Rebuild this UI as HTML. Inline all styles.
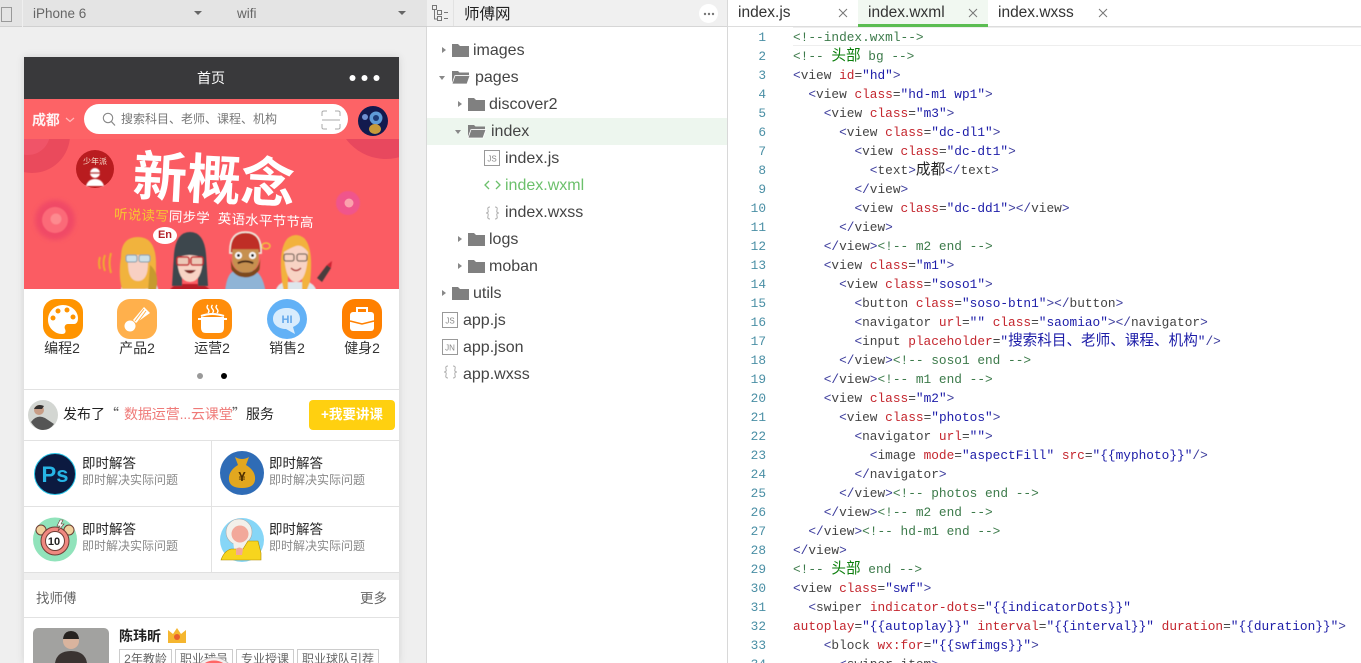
<!DOCTYPE html>
<html><head><meta charset="utf-8"><style>
html,body{margin:0;padding:0;width:1361px;height:663px;overflow:hidden;background:#fff}
body{position:relative;font-family:"Liberation Sans","Noto Sans CJK SC",sans-serif;color:#333}
div,span{box-sizing:border-box}
.p{position:absolute;white-space:nowrap}
.tree{font-size:16px;color:#444;line-height:27px;height:27px}
.code{position:absolute;left:793px;top:28px;height:635px;overflow:hidden;font:12.8px/19px "Liberation Mono","Noto Sans CJK SC",monospace;color:#444;white-space:pre}
.nums{position:absolute;left:728px;top:28px;height:635px;overflow:hidden;width:38px;text-align:right;font:12.8px/19px "Liberation Mono",monospace;color:#4a8fa5;white-space:pre}
.code b{font-weight:400;color:#3b3b9c}.code i{font-style:normal;color:#c4262e}.code u{text-decoration:none;color:#1c1ca8}.code em{font-style:normal;color:#3c7a4a}.code q{quotes:none;color:#0a7d0a;font-size:14.6px;line-height:1}.code s{text-decoration:none;color:#1c1ca8;font-size:14.6px;line-height:1}
.ic{position:absolute;top:299px;width:40px;height:40px;border-radius:13px}
.lb{position:absolute;top:339px;font-size:14px;line-height:18px;color:#333;width:60px;text-align:center}
.t1{position:absolute;font-size:13.5px;color:#222;line-height:18px;white-space:nowrap}
.t2{position:absolute;font-size:12px;color:#888;line-height:16px;white-space:nowrap}
.tag{position:absolute;top:649px;height:14px;overflow:hidden;border:1px solid #ccc;border-bottom:0;font-size:12px;color:#666;text-align:center;line-height:18px;white-space:nowrap}
</style></head><body>

<!-- left sim -->
<div class="p" style="left:0;top:0;width:427px;height:663px;background:#efefef;border-right:1px solid #d8d8d8"></div>
<div class="p" style="left:0;top:0;width:427px;height:27px;background:#e4e4e4;border-bottom:1px solid #d0d0d0"></div>
<div class="p" style="left:22px;top:0;width:1px;height:27px;background:#efefef"></div>
<div class="p" style="left:1px;top:7px;width:11px;height:15px;border:1px solid #999"></div>
<div class="p" style="left:33px;top:5px;font-size:13.5px;line-height:18px;color:#666">iPhone 6</div>
<div class="p" style="left:237px;top:5px;font-size:13.5px;line-height:18px;color:#666">wifi</div>
<div class="p" style="left:194px;top:11px;border:4px solid transparent;border-top:4px solid #666"></div>
<div class="p" style="left:398px;top:11px;border:4px solid transparent;border-top:4px solid #666"></div>

<!-- phone -->
<div class="p" style="left:24px;top:57px;width:375px;height:606px;background:#fff;box-shadow:0 0 8px rgba(0,0,0,.12);overflow:hidden"></div>
<div class="p" style="left:24px;top:57px;width:375px;height:42px;background:#39393b"></div>
<div class="p" style="left:197px;top:69px;color:#fff;font-size:14px;line-height:18px">首页</div>
<svg class="p" style="left:345px;top:72px" width="36" height="12"><circle cx="7.5" cy="6" r="3" fill="#fff"/><circle cx="19.5" cy="6" r="3" fill="#fff"/><circle cx="31.5" cy="6" r="3" fill="#fff"/></svg>

<div class="p" style="left:24px;top:99px;width:375px;height:40px;background:#fd6366"></div>
<div class="p" style="left:32px;top:111px;color:#fff;font-size:14px;font-weight:700;line-height:18px;opacity:.92;letter-spacing:-.3px">成都</div>
<svg class="p" style="left:65px;top:117px" width="10" height="6"><path d="M1 1l4 3.5L9 1" fill="none" stroke="#fbb" stroke-width="1.2"/></svg>
<div class="p" style="left:84px;top:104px;width:264px;height:30px;background:#fff;border-radius:15px"></div>
<svg class="p" style="left:102px;top:112px" width="14" height="15"><circle cx="6" cy="6" r="4.7" fill="none" stroke="#888" stroke-width="1.1"/><path d="M9.5 9.7l3.5 3.800" stroke="#888" stroke-width="1.2"/></svg>
<div class="p" style="left:121px;top:110px;font-size:12px;line-height:18px;color:#777">搜索科目、老师、课程、机构</div>
<svg class="p" style="left:321px;top:110px" width="20" height="20" fill="none" stroke="#aaa" stroke-width="1"><path d="M1 6V2.500Q1 1 3 1h3M14 1h3q2 0 2 1.500V6M1 14v3.500Q1 19 3 19h3M14 19h3q2 0 2-1.500V14M1 10h18"/></svg>
<svg class="p" style="left:358px;top:106px" width="30" height="30"><circle cx="15" cy="15" r="15" fill="#121a4e"/><circle cx="18" cy="12" r="6.500" fill="#5f9bd8"/><circle cx="18" cy="12" r="3" fill="#1d3c78"/><ellipse cx="17" cy="23" rx="6" ry="5" fill="#c79a3a"/><circle cx="7" cy="11" r="3" fill="#6f8fd0"/></svg>

<!-- banner -->
<div class="p" style="left:24px;top:139px;width:375px;height:150px;overflow:hidden;background:#fb5c63">
<svg width="375" height="150" style="position:absolute;left:0;top:0">
<defs><filter id="bl"><feGaussianBlur stdDeviation=".6"/></filter><filter id="b2"><feGaussianBlur stdDeviation="2.500"/></filter></defs>
<circle cx="8" cy="-4" r="38" fill="#ea4a5c"/><circle cx="4" cy="-6" r="22" fill="#f05468"/>
<circle cx="362" cy="-30" r="50" fill="#e8485e"/>
<circle cx="31" cy="81" r="20" fill="#f04a66" filter="url(#b2)"/><circle cx="31" cy="81" r="13" fill="#fb6b78" filter="url(#bl)"/><circle cx="32" cy="80" r="5.500" fill="#fd8a8f" filter="url(#bl)"/>
<circle cx="324" cy="64" r="12" fill="#f0558c" filter="url(#bl)"/><circle cx="325" cy="64" r="4.500" fill="#fba2ad"/>
<circle cx="71" cy="30" r="19" fill="#b91c1f"/>
<g filter="url(#bl)">
<path d="M62 47q2-7 9-7t9 7z" fill="#fff"/><circle cx="71" cy="34" r="5" fill="#fff"/><path d="M66 34h10" stroke="#b91c1f" stroke-width="1.500"/>
<!-- char 1 -->
<g transform="translate(0,6)">
<path d="M96 150q2-18 10-20h16q12 4 13 20z" fill="#dde6ec"/>
<path d="M97 112q0-20 17-20t18 24v24q-4 4-14 4H98q-4-14-1-32z" fill="#f1b33c"/>
<path d="M104 118q0 18 10 18t10-18v-12h-20z" fill="#f8d0c3"/>
<path d="M102 104q12-8 26 0v6h-26z" fill="#f1b33c"/>
<rect x="102" y="110" width="11" height="7" rx="2" fill="#cfe0e8" stroke="#7d97a5"/><rect x="115" y="110" width="11" height="7" rx="2" fill="#cfe0e8" stroke="#7d97a5"/>
<path d="M126 120q10 8 6 26h-8z" fill="#c69a2e"/>
<path d="M76 112q-2 6 0 12M81 110q-3 8 0 16M87 108q-3 10 0 20" stroke="#f0a830" stroke-width="2" fill="none"/>
</g>
<!-- char 2 -->
<g transform="translate(0,9)">
<path d="M143 150q2-12 12-14h20q12 2 14 14z" fill="#ba1f26"/>
<path d="M150 106q2-22 16-22t16 22l2 32h-10v-20h-16v20h-10z" fill="#3d464e"/>
<path d="M153 110q1 24 13 24t13-24q-14-6-26 0z" fill="#f8d3c4"/>
<rect x="153" y="109" width="12" height="8" rx="2" fill="#ecc9b8" stroke="#c3252a" stroke-width="1.500"/><rect x="167" y="109" width="12" height="8" rx="2" fill="#ecc9b8" stroke="#c3252a" stroke-width="1.500"/>
<path d="M160 122q6 7 12 0z" fill="#7d2b26"/>
</g>
<!-- char 3 -->
<g transform="translate(46,26) scale(.78)">
<path d="M198 170q2-34 14-34h24q12 2 16 34z" fill="#8fb4d6"/>
<path d="M205 110q0-24 20-24t20 24v3h-40z" fill="#bf2e26" stroke="#f2ece0" stroke-width="2"/>
<path d="M208 108h34v16q-4 14-17 14t-17-14z" fill="#c6904f"/>
<path d="M206 120q3 18 19 18t19-18l-1 14q-6 10-18 10t-18-10z" fill="#7d4a1d"/>
<circle cx="216" cy="116" r="4.500" fill="#fff"/><circle cx="234" cy="116" r="4.500" fill="#fff"/><circle cx="216" cy="116" r="2" fill="#222"/><circle cx="234" cy="116" r="2" fill="#222"/>
<path d="M215 126q10-5 20 0" stroke="#3e2313" stroke-width="2.500" fill="none"/>
</g>
<ellipse cx="242" cy="107" rx="4" ry="3" fill="none" stroke="#f0c33c" stroke-width="1.500"/>
<!-- char 4 -->
<g transform="translate(-2,7)">
<path d="M252 150q2-12 10-14h24q8 2 10 14z" fill="#dde6ec"/>
<path d="M260 136q-4-34 6-44 8-6 16 0 10 10 6 44l-4 10h-4v-28h-14v28h-4z" fill="#f2b23c"/>
<path d="M262 106q1 30 12 30t12-30q-6-8-12-6t-12 6z" fill="#f8d3c4"/>
<rect x="262" y="108" width="10" height="7" rx="2" fill="none" stroke="#77665a" stroke-width="1.300"/><rect x="275" y="108" width="10" height="7" rx="2" fill="none" stroke="#77665a" stroke-width="1.300"/>
<path d="M269 122q5 5 10 0" stroke="#a33" stroke-width="1.500" fill="none"/>
</g>
<path d="M293 139l10-13 4 3-9 14z" fill="#4a3c3c"/><path d="M303 126l5-4-1 7z" fill="#c23"/>
</g>
</svg>
<div style="position:absolute;left:109px;top:11px;width:170px;height:54px;font-size:54px;line-height:54px;font-weight:700;color:#fff;white-space:nowrap;transform:rotate(3deg);transform-origin:left center">新概念</div>
<div style="position:absolute;left:90px;top:71px;font-size:13.5px;line-height:18px;color:#fff;white-space:nowrap;transform:rotate(2.500deg);letter-spacing:.2px"><span style="color:#f7c531">听说读写</span>同步学&nbsp;&nbsp;英语水平节节高</div>
<div style="position:absolute;left:129px;top:88px;width:24px;height:17px;border-radius:50%;background:#fff;color:#b4232a;font-size:11px;font-weight:700;line-height:17px;text-align:center">En</div>
<div style="position:absolute;left:59px;top:18px;font-size:8px;line-height:10px;color:#f6d7c6">少年派</div>
</div>

<!-- icons -->
<div class="ic" style="left:43px;background:#ff9400"><svg width="40" height="40"><path d="M20 6C11 6 5 13 5 21s7 14 14 14c4 0 4-3 3-5s0-5 3-5h6c3 0 4-3 4-6C35 12 28 6 20 6z" fill="#fff"/><circle cx="15" cy="12" r="2.500" fill="#ff9400"/><circle cx="24" cy="11" r="2.500" fill="#ff9400"/><circle cx="30" cy="18" r="2.500" fill="#ff9400"/><circle cx="10" cy="19" r="2.500" fill="#ff9400"/></svg></div>
<div class="ic" style="left:117px;background:#ffb04c"><svg width="40" height="40"><path d="M27 8l6 6-14 10-3-3z" fill="#fff"/><circle cx="13" cy="27" r="5.500" fill="#fff"/><path d="M18 22L27 10M20 24l9-12" stroke="#ffb04c" stroke-width="1"/></svg></div>
<div class="ic" style="left:192px;background:#ff8d0a"><svg width="40" height="40"><path d="M9 18h23v11q0 5-5 5H14q-5 0-5-5z" fill="#fff"/><path d="M6 20h29" stroke="#fff" stroke-width="2"/><path d="M9 17q11-4 23 0" stroke="#fff" stroke-width="2" fill="none"/><path d="M16 6q-2 2 0 4t0 4M20.500 6q-2 2 0 4t0 4M25 6q-2 2 0 4t0 4" stroke="#fff" stroke-width="1.400" fill="none"/></svg></div>
<div class="ic" style="left:267px;background:#62b1f6;border-radius:50%"><svg width="40" height="40"><path d="M20 9c-8 0-14 4-14 11 0 6 6 10 13 10l9 5-2-7c4-2 7-4 7-8 0-7-6-11-13-11z" fill="#d8ecfd"/><text x="20" y="24" font-size="11" font-weight="700" fill="#62a7ea" text-anchor="middle" font-family="Liberation Sans">HI</text></svg></div>
<div class="ic" style="left:342px;background:#ff8000"><svg width="40" height="40"><rect x="8" y="13" width="24" height="19" rx="3" fill="#fff"/><path d="M15 13V9h10v4" fill="none" stroke="#fff" stroke-width="2"/><path d="M8 22l12 3 12-3" stroke="#ff8000" stroke-width="1.500" fill="none"/></svg></div>
<div class="lb" style="left:32px">编程2</div><div class="lb" style="left:107px">产品2</div><div class="lb" style="left:182px">运营2</div><div class="lb" style="left:257px">销售2</div><div class="lb" style="left:332px">健身2</div>
<div class="p" style="left:197px;top:373px;width:6px;height:6px;border-radius:50%;background:#999"></div>
<div class="p" style="left:221px;top:373px;width:6px;height:6px;border-radius:50%;background:#000"></div>
<div class="p" style="left:24px;top:389px;width:375px;height:1px;background:#e2e2e2"></div>

<!-- notice -->
<svg class="p" style="left:28px;top:400px" width="30" height="30"><circle cx="15" cy="15" r="15" fill="#d3d6d2"/><path d="M3 22q6-8 14-4l9 6q-4 6-11 6T3 22z" fill="#555"/><circle cx="11" cy="10" r="5" fill="#c79d86"/><path d="M6 9q3-6 10-3l-2 3z" fill="#33302e"/></svg>
<div class="p" style="left:63px;top:405px;font-size:14px;line-height:18px;color:#222">发布了</div>
<div class="p" style="left:105px;top:405px;font-size:14px;line-height:18px;color:#555;font-family:'Noto Sans CJK SC',sans-serif">“</div>
<div class="p" style="left:124px;top:405px;font-size:14px;line-height:18px;color:#ef7a78;letter-spacing:-.1px">数据运营...云课堂</div>
<div class="p" style="left:232px;top:405px;font-size:14px;line-height:18px;color:#555;font-family:'Noto Sans CJK SC',sans-serif">”</div>
<div class="p" style="left:246px;top:405px;font-size:14px;line-height:18px;color:#222">服务</div>
<div class="p" style="left:309px;top:400px;width:86px;height:30px;background:#ffd010;border-radius:4px;color:#fff;font-size:13.5px;font-weight:700;line-height:30px;text-align:center">+我要讲课</div>
<div class="p" style="left:24px;top:440px;width:375px;height:1px;background:#e2e2e2"></div>
<div class="p" style="left:211px;top:440px;width:1px;height:133px;background:#e2e2e2"></div>
<div class="p" style="left:24px;top:506px;width:375px;height:1px;background:#e2e2e2"></div>
<div class="p" style="left:24px;top:572px;width:375px;height:8px;background:#f0f0f0;border-top:1px solid #e0e0e0"></div>

<svg class="p" style="left:34px;top:452px" width="42" height="44"><circle cx="21" cy="22" r="20.500" fill="#0c1a40" stroke="#27c3e6" stroke-width="1"/><text x="21" y="30" font-size="22" font-weight="700" fill="#27b5e6" text-anchor="middle" font-family="Liberation Sans">Ps</text></svg>
<svg class="p" style="left:220px;top:451px" width="44" height="44"><circle cx="22" cy="22" r="22" fill="#2f6cb6"/><path d="M15 6q7 4 14 0l-3 8q10 6 9 15-1 8-13 8T9 29q-1-9 9-15z" fill="#e2a71f"/><text x="22" y="30" font-size="13" font-weight="700" fill="#4a2c00" text-anchor="middle" font-family="Liberation Sans">¥</text></svg>
<svg class="p" style="left:33px;top:517px" width="44" height="45"><circle cx="22" cy="22.500" r="22" fill="#91e3bb"/><circle cx="8" cy="13" r="5" fill="#f0d09c" stroke="#6f3d35"/><circle cx="36" cy="13" r="5" fill="#f0d09c" stroke="#6f3d35"/><circle cx="22" cy="24" r="14" fill="#ef8880" stroke="#6f3d35"/><circle cx="22" cy="24" r="9.500" fill="#fff" stroke="#6f3d35"/><path d="M27 3l-3 6h3l-2 5 6-7h-3l2-4z" fill="#fff" stroke="#6f3d35" stroke-width=".6"/><text x="21" y="28" font-size="11" font-weight="700" fill="#222" text-anchor="middle" font-family="Liberation Sans">10</text></svg>
<svg class="p" style="left:220px;top:518px" width="44" height="44"><circle cx="22" cy="22" r="22" fill="#86d6f7"/><circle cx="19" cy="14" r="13" fill="#f3f0ea" stroke="#aaa" stroke-width=".6"/><circle cx="20" cy="16" r="8.500" fill="#f2a89a"/><path d="M13 22q7 7 14 0l-1 9h-12z" fill="#f3f0ea"/><path d="M1 42q3-9 10-11h12l5-8h10l3 12v7z" fill="#f7d51e" stroke="#b08a00" stroke-width=".6"/><path d="M16 31q3-3 7 0l-1 6h-6z" fill="#f2a89a"/></svg>

<div class="t1" style="left:82px;top:455px">即时解答</div><div class="t2" style="left:82px;top:472px">即时解决实际问题</div>
<div class="t1" style="left:269px;top:455px">即时解答</div><div class="t2" style="left:269px;top:472px">即时解决实际问题</div>
<div class="t1" style="left:82px;top:521px">即时解答</div><div class="t2" style="left:82px;top:538px">即时解决实际问题</div>
<div class="t1" style="left:269px;top:521px">即时解答</div><div class="t2" style="left:269px;top:538px">即时解决实际问题</div>

<div class="p" style="left:36px;top:590px;font-size:13.5px;line-height:18px;color:#666">找师傅</div>
<div class="p" style="left:360px;top:590px;font-size:13.5px;line-height:18px;color:#666">更多</div>
<div class="p" style="left:24px;top:617px;width:375px;height:1px;background:#e2e2e2"></div>
<svg class="p" style="left:33px;top:628px;border-radius:5px 5px 0 0" width="76" height="35"><rect width="76" height="35" fill="#a2a2a0"/><circle cx="38" cy="13" r="8" fill="#d9b49e"/><path d="M30 11q1-8 8-8t8 8z" fill="#262220"/><path d="M22 35q2-12 16-12t16 12z" fill="#3a3331"/></svg>
<div class="p" style="left:119px;top:627px;font-size:14px;font-weight:700;line-height:18px;color:#222">陈玮昕</div>
<svg class="p" style="left:167px;top:627px" width="20" height="17"><path d="M1 3l5 4 4-6 4 6 5-4v13H1z" fill="#f5b62f"/><circle cx="10" cy="10" r="3" fill="#e85f2c"/></svg>
<div class="tag" style="left:119px;width:53px">2年教龄</div>
<div class="tag" style="left:175px;width:58px">职业球员</div>
<div class="tag" style="left:236px;width:58px">专业授课</div>
<div class="tag" style="left:297px;width:82px">职业球队引荐</div>
<svg class="p" style="left:193px;top:657px" width="42" height="6"><circle cx="21" cy="21" r="19" fill="#f66" stroke="#f3eeee" stroke-width="3"/><circle cx="21" cy="21" r="20.500" fill="none" stroke="#bbb"/></svg>

<!-- tree -->
<div class="p" style="left:427px;top:0;width:301px;height:663px;background:#fff;border-right:1px solid #d8d8d8"></div>
<div class="p" style="left:427px;top:0;width:300px;height:27px;background:#f0f0f0;border-bottom:1px solid #d6d6d6"></div>
<div class="p" style="left:453px;top:0;width:1px;height:26px;background:#e2e2e2"></div>
<svg class="p" style="left:431px;top:4px" width="18" height="18" fill="none" stroke="#777"><rect x="1.500" y="1.500" width="4" height="4"/><rect x="6.500" y="12.500" width="4" height="4"/><rect x="6.500" y="6.500" width="4" height="4"/><path d="M3.500 6v9h3M13 8.500h4M13 14.500h4"/></svg>
<div class="p" style="left:464px;top:5px;font-size:15.500px;line-height:20px;color:#222">师傅网</div>
<div class="p" style="left:699px;top:4px;width:19px;height:19px;border-radius:50%;background:#fff"></div>
<svg class="p" style="left:703px;top:12px" width="12" height="4" fill="#777"><circle cx="2" cy="2" r="1.200"/><circle cx="6" cy="2" r="1.200"/><circle cx="10" cy="2" r="1.200"/></svg>
<div class="p" style="left:427px;top:118px;width:300px;height:27px;background:#edf6ee"></div>
<svg class="p" style="left:427px;top:27px" width="300" height="370">
<defs>
<g id="f"><path d="M0 3h6l2 2h9v11H0z" fill="#808080"/></g>
<g id="o"><path d="M0 3h6l1.500 1.500H17V7H4L1 15H0z" fill="#808080"/><path d="M3 7.500h15L15 16H0z" fill="#808080" stroke="#fff" stroke-width=".8"/></g>
<path id="r" d="M0 0l4 3-4 3z" fill="#888"/><path id="d" d="M0 0h6L3 4z" fill="#888"/>
<g id="js"><rect x=".5" y=".5" width="15" height="15" fill="#fff" stroke="#999"/></g>
</defs>
<use href="#r" x="15" y="20"/><use href="#f" x="25" y="14"/>
<use href="#d" x="12" y="49"/><use href="#o" x="25" y="41"/>
<use href="#r" x="31" y="74"/><use href="#f" x="41" y="68"/>
<use href="#d" x="28" y="103"/><use href="#o" x="41" y="95"/>
<use href="#js" x="57" y="123"/>
<path d="M62 154l-4 4 4 4M69 154l4 4-4 4" fill="none" stroke="#6cc06c" stroke-width="1.300"/>
<path d="M63 180q-3 0-2 3t-2 3q3 0 2 3t2 3M68 180q3 0 2 3t2 3q-3 0-2 3t-2 3" fill="none" stroke="#aaa"/>
<use href="#r" x="31" y="209"/><use href="#f" x="41" y="203"/>
<use href="#r" x="31" y="236"/><use href="#f" x="41" y="230"/>
<use href="#r" x="15" y="263"/><use href="#f" x="25" y="257"/>
<use href="#js" x="15" y="285"/><use href="#js" x="15" y="312"/>
<path d="M21 339q-3 0-2 3t-2 3q3 0 2 3t2 3M26 339q3 0 2 3t2 3q-3 0-2 3t-2 3" fill="none" stroke="#aaa"/>
<text x="65" y="134.500" font-size="8" fill="#888" text-anchor="middle" font-family="Liberation Sans">JS</text>
<text x="23" y="296.500" font-size="8" fill="#888" text-anchor="middle" font-family="Liberation Sans">JS</text>
<text x="23" y="323.500" font-size="8" fill="#888" text-anchor="middle" font-family="Liberation Sans">JN</text>
</svg>
<div class="p tree" style="left:473px;top:37px">images</div>
<div class="p tree" style="left:475px;top:64px">pages</div>
<div class="p tree" style="left:489px;top:91px">discover2</div>
<div class="p tree" style="left:491px;top:118px">index</div>
<div class="p tree" style="left:505px;top:145px">index.js</div>
<div class="p tree" style="left:505px;top:172px;color:#6cc06c">index.wxml</div>
<div class="p tree" style="left:505px;top:199px">index.wxss</div>
<div class="p tree" style="left:489px;top:226px">logs</div>
<div class="p tree" style="left:489px;top:253px">moban</div>
<div class="p tree" style="left:473px;top:280px">utils</div>
<div class="p tree" style="left:463px;top:307px">app.js</div>
<div class="p tree" style="left:463px;top:334px">app.json</div>
<div class="p tree" style="left:463px;top:361px">app.wxss</div>

<!-- tabs -->
<div class="p" style="left:728px;top:0;width:633px;height:27px;background:#fff;border-bottom:1px solid #ddd"></div>
<div class="p" style="left:858px;top:0;width:130px;height:27px;background:#f1f8f1;border-bottom:3px solid #5bbd52"></div>
<div class="p" style="left:738px;top:3px;font-size:15.500px;line-height:20px;color:#333">index.js</div>
<div class="p" style="left:868px;top:3px;font-size:15.500px;line-height:20px;color:#333">index.wxml</div>
<div class="p" style="left:998px;top:3px;font-size:15.500px;line-height:20px;color:#333">index.wxss</div>
<svg class="p" style="left:838px;top:8px" width="270" height="10" stroke="#777" fill="none"><path d="M1 1l8 8M9 1l-8 8M131 1l8 8M139 1l-8 8M261 1l8 8M269 1l-8 8"/></svg>

<!-- code -->
<div class="p" style="left:793px;top:27px;width:568px;height:19px;border-top:1px solid #eee;border-bottom:1px solid #eee"></div>
<div class="nums">1
2
3
4
5
6
7
8
9
10
11
12
13
14
15
16
17
18
19
20
21
22
23
24
25
26
27
28
29
30
31
32
33
34</div>
<div class="code"><em>&lt;!--index.wxml--&gt;</em>
<em>&lt;!-- <q>头部</q> bg --&gt;</em>
<b>&lt;</b>view <i>id</i>=<u>"hd"</u><b>&gt;</b>
  <b>&lt;</b>view <i>class</i>=<u>"hd-m1 wp1"</u><b>&gt;</b>
    <b>&lt;</b>view <i>class</i>=<u>"m3"</u><b>&gt;</b>
      <b>&lt;</b>view <i>class</i>=<u>"dc-dl1"</u><b>&gt;</b>
        <b>&lt;</b>view <i>class</i>=<u>"dc-dt1"</u><b>&gt;</b>
          <b>&lt;</b>text<b>&gt;</b><span style="font-size:14.6px;line-height:1;color:#222">成都</span><b>&lt;/</b>text<b>&gt;</b>
        <b>&lt;/</b>view<b>&gt;</b>
        <b>&lt;</b>view <i>class</i>=<u>"dc-dd1"</u><b>&gt;&lt;/</b>view<b>&gt;</b>
      <b>&lt;/</b>view<b>&gt;</b>
    <b>&lt;/</b>view<b>&gt;</b><em>&lt;!-- m2 end --&gt;</em>
    <b>&lt;</b>view <i>class</i>=<u>"m1"</u><b>&gt;</b>
      <b>&lt;</b>view <i>class</i>=<u>"soso1"</u><b>&gt;</b>
        <b>&lt;</b>button <i>class</i>=<u>"soso-btn1"</u><b>&gt;&lt;/</b>button<b>&gt;</b>
        <b>&lt;</b>navigator <i>url</i>=<u>""</u> <i>class</i>=<u>"saomiao"</u><b>&gt;&lt;/</b>navigator<b>&gt;</b>
        <b>&lt;</b>input <i>placeholder</i>=<u>"<s>搜索科目、老师、课程、机构</s>"</u><b>/&gt;</b>
      <b>&lt;/</b>view<b>&gt;</b><em>&lt;!-- soso1 end --&gt;</em>
    <b>&lt;/</b>view<b>&gt;</b><em>&lt;!-- m1 end --&gt;</em>
    <b>&lt;</b>view <i>class</i>=<u>"m2"</u><b>&gt;</b>
      <b>&lt;</b>view <i>class</i>=<u>"photos"</u><b>&gt;</b>
        <b>&lt;</b>navigator <i>url</i>=<u>""</u><b>&gt;</b>
          <b>&lt;</b>image <i>mode</i>=<u>"aspectFill"</u> <i>src</i>=<u>"{{myphoto}}"</u><b>/&gt;</b>
        <b>&lt;/</b>navigator<b>&gt;</b>
      <b>&lt;/</b>view<b>&gt;</b><em>&lt;!-- photos end --&gt;</em>
    <b>&lt;/</b>view<b>&gt;</b><em>&lt;!-- m2 end --&gt;</em>
  <b>&lt;/</b>view<b>&gt;</b><em>&lt;!-- hd-m1 end --&gt;</em>
<b>&lt;/</b>view<b>&gt;</b>
<em>&lt;!-- <q>头部</q> end --&gt;</em>
<b>&lt;</b>view <i>class</i>=<u>"swf"</u><b>&gt;</b>
  <b>&lt;</b>swiper <i>indicator-dots</i>=<u>"{{indicatorDots}}"</u>
<i>autoplay</i>=<u>"{{autoplay}}"</u> <i>interval</i>=<u>"{{interval}}"</u> <i>duration</i>=<u>"{{duration}}"</u><b>&gt;</b>
    <b>&lt;</b>block <i>wx:for</i>=<u>"{{swfimgs}}"</u><b>&gt;</b>
      <b>&lt;</b>swiper-item<b>&gt;</b></div>
</body></html>
